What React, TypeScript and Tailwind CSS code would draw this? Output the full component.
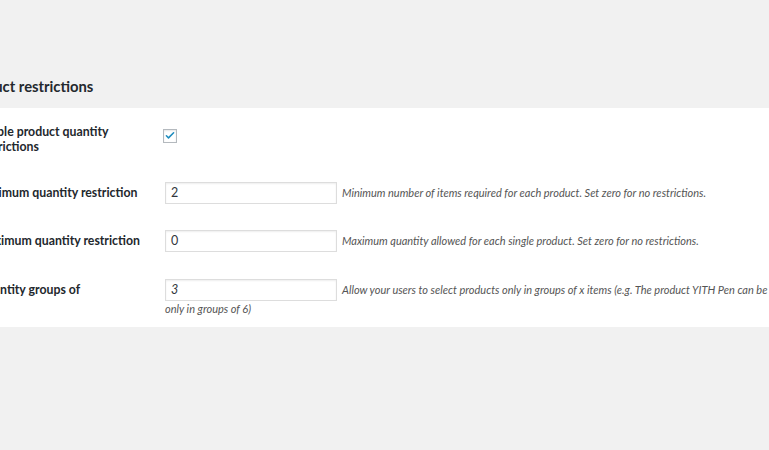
import React from "react";

const font = { fontFamily: 'Lato, "Open Sans", sans-serif' };

function Check() {
  return (
    <span className="inline-flex h-[14px] w-[14px] items-center justify-center border border-[#b4b9be] bg-white shadow-[inset_0_1px_2px_rgba(0,0,0,0.1)]">
      <svg viewBox="0 0 20 20" className="h-[13px] w-[13px]">
        <path d="M4 10.5l3.5 3.5L16 5.5" fill="none" stroke="#1e8cbe" strokeWidth="2.6" strokeLinecap="round" strokeLinejoin="round" />
      </svg>
    </span>
  );
}

function Input({ value }: { value: string }) {
  return (
    <div className="flex h-[22px] w-[172px] shrink-0 items-center border border-[#ddd] bg-white pl-[5px] text-[12.5px] text-[#32373c] shadow-[inset_0_1px_2px_rgba(0,0,0,0.07)]">
      {value}
    </div>
  );
}

export default function App() {
  return (
    <div className="h-[450px] w-[769px] overflow-hidden bg-[#f1f1f1] text-[#23282d]" style={font}>
      <div className="pt-[76px]">
        <h2 className="ml-[-37px] whitespace-nowrap text-[14.8px] font-bold leading-[20px]">Product restrictions</h2>
      </div>
      <div className="mt-[12px] w-[900px] bg-white pb-[10px]">
        <div className="flex pt-[16px]">
          <div className="ml-[-23px] w-[188px] pr-[10px] text-[12.3px] font-bold leading-[15px]">Enable product quantity restrictions</div>
          <div className="ml-[-2px]">
            <Check />
          </div>
        </div>
        <div className="flex items-center pt-[28px]">
          <div className="ml-[-23px] w-[188px] whitespace-nowrap pr-[10px] text-[12.3px] font-bold">Minimum quantity restriction</div>
          <Input value="2" />
          <span className="ml-[5px] whitespace-nowrap text-[11px] italic text-[#555]">Minimum number of items required for each product. Set zero for no restrictions.</span>
        </div>
        <div className="flex items-center pt-[26px]">
          <div className="ml-[-23px] w-[188px] whitespace-nowrap pr-[10px] text-[12.3px] font-bold">Maximum quantity restriction</div>
          <Input value="0" />
          <span className="ml-[5px] whitespace-nowrap text-[11px] italic text-[#555]">Maximum quantity allowed for each single product. Set zero for no restrictions.</span>
        </div>
        <div className="flex pt-[27px]">
          <div className="ml-[-23px] flex h-[22px] w-[188px] items-center whitespace-nowrap pr-[10px] text-[12.3px] font-bold">Quantity groups of</div>
          <div className="text-[11px] italic leading-[16px] text-[#555]">
            <div className="flex items-center">
              <Input value="3" />
              <span className="ml-[5px] whitespace-nowrap">Allow your users to select products only in groups of x items (e.g. The product YITH Pen can be bought</span>
            </div>
            <div className="mt-0 whitespace-nowrap">only in groups of 6)</div>
          </div>
        </div>
      </div>
    </div>
  );
}
